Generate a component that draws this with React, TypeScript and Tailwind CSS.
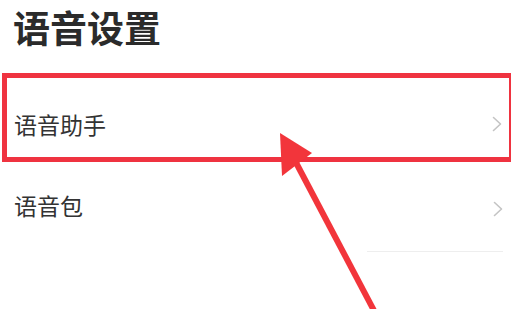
import React from 'react'

function Chevron() {
  return (
    <svg width="10" height="16" viewBox="0 0 10 16" className="shrink-0">
      <polyline points="1.5,1.5 8.5,8 1.5,14.5" fill="none" stroke="#c4c4c4" strokeWidth="1.6" strokeLinecap="round" strokeLinejoin="round" />
    </svg>
  )
}

function Arrow() {
  return (
    <svg width="514" height="309" viewBox="0 0 514 309" className="absolute left-0 top-0 pointer-events-none">
      <line x1="292" y1="155" x2="380" y2="322" stroke="#f2353b" strokeWidth="6" />
      <polygon points="280,133 282,176 312,153" fill="#f2353b" />
    </svg>
  )
}

export default function App() {
  return (
    <div className="relative w-[514px] h-[309px] overflow-hidden bg-white font-['Noto_Sans_CJK_SC','Noto_Sans',sans-serif]">
      <h1 className="pt-[7px] pl-[13px] h-[47px] text-[37px] leading-[40px] font-bold text-[#2b2b2b]">语音设置</h1>

      <div className="mt-[26px] ml-[2px] w-[509px] h-[89px] flex items-center justify-between border-t-[5px] border-l-[5px] border-b-[5px] border-r-2 border-[#ef3340] pl-[7px] pr-[7px] pt-[13px]">
        <span className="text-[23px] leading-[30px] text-[#333]">语音助手</span>
        <Chevron />
      </div>

      <div className="h-[89px] flex items-center justify-between pl-[14px] pr-[11px] pb-[4px]">
        <span className="text-[23px] leading-[30px] text-[#333]">语音包</span>
        <div className="pt-[8px]">
          <Chevron />
        </div>
      </div>
      <div className="ml-[367px] w-[136px] h-px bg-[#eeeeee]" />

      <Arrow />
    </div>
  )
}
